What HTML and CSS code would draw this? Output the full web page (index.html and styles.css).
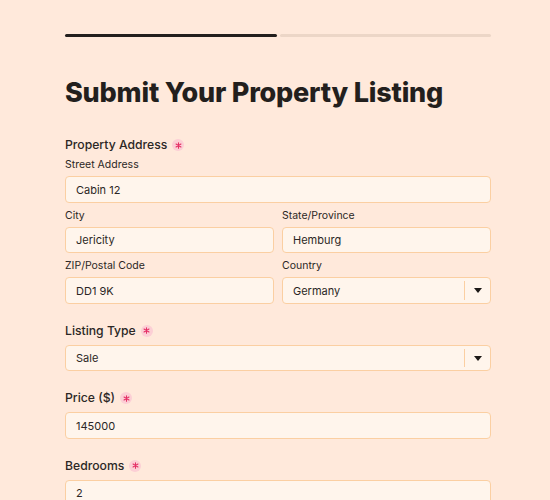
FILE: index.html
```html
<!DOCTYPE html>
<html lang="en">
<head>
<meta charset="utf-8">
<title>Submit Your Property Listing</title>
<link rel="stylesheet" href="styles.css">
</head>
<body>
<div class="page">
  <div class="progress">
    <div class="progress-seg done"></div>
    <div class="progress-seg"></div>
  </div>
  <h1 class="title">Submit Your Property Listing</h1>

  <div class="group">
    <div class="label">Property Address <span class="req"><svg viewBox="0 0 10 10" width="7" height="7"><path d="M5 1v8M1.5 3l7 4M8.5 3l-7 4" stroke="currentColor" stroke-width="1.6" stroke-linecap="round"/></svg></span></div>
    <div class="sub">
      <div class="sublabel">Street Address</div>
      <div class="input">Cabin 12</div>
    </div>
    <div class="row">
      <div class="sub">
        <div class="sublabel">City</div>
        <div class="input">Jericity</div>
      </div>
      <div class="sub">
        <div class="sublabel">State/Province</div>
        <div class="input">Hemburg</div>
      </div>
    </div>
    <div class="row">
      <div class="sub">
        <div class="sublabel">ZIP/Postal Code</div>
        <div class="input">DD1 9K</div>
      </div>
      <div class="sub">
        <div class="sublabel">Country</div>
        <div class="input select"><span class="val">Germany</span><span class="sep"></span><span class="caret"></span></div>
      </div>
    </div>
  </div>

  <div class="group">
    <div class="label">Listing Type <span class="req"><svg viewBox="0 0 10 10" width="7" height="7"><path d="M5 1v8M1.5 3l7 4M8.5 3l-7 4" stroke="currentColor" stroke-width="1.6" stroke-linecap="round"/></svg></span></div>
    <div class="input select"><span class="val">Sale</span><span class="sep"></span><span class="caret"></span></div>
  </div>

  <div class="group">
    <div class="label">Price ($) <span class="req"><svg viewBox="0 0 10 10" width="7" height="7"><path d="M5 1v8M1.5 3l7 4M8.5 3l-7 4" stroke="currentColor" stroke-width="1.6" stroke-linecap="round"/></svg></span></div>
    <div class="input">145000</div>
  </div>

  <div class="group">
    <div class="label">Bedrooms <span class="req"><svg viewBox="0 0 10 10" width="7" height="7"><path d="M5 1v8M1.5 3l7 4M8.5 3l-7 4" stroke="currentColor" stroke-width="1.6" stroke-linecap="round"/></svg></span></div>
    <div class="input">2</div>
  </div>
</div>
</body>
</html>
```

FILE: styles.css
```css
* { box-sizing: border-box; }
html, body { margin: 0; padding: 0; }
body {
  background: #ffe9db;
  font-family: Inter, "Noto Sans", sans-serif;
  color: #2b2725;
}
.page {
  padding: 34px 59px 0 65px;
}
.progress {
  display: flex;
  gap: 3px;
}
.progress-seg {
  flex: 1;
  height: 3px;
  border-radius: 2px;
  background: #ecd6c7;
}
.progress-seg.done { background: #231f1d; }
.title {
  margin: 40px 0 27px;
  font-size: 27px;
  line-height: 1.2;
  font-weight: 800;
  color: #231f1d;
  letter-spacing: -0.2px;
}
.group {
  display: flex;
  flex-direction: column;
  gap: 6px;
  margin-bottom: 18px;
}
.label {
  font-size: 12.2px;
  line-height: 18px;
  font-weight: 500;
  color: #2b2725;
  margin-bottom: -1px;
  display: flex;
  align-items: center;
}
.group .label + .sub { margin-top: -1px; }
.req {
  display: inline-flex;
  align-items: center;
  justify-content: center;
  width: 12px;
  height: 12px;
  margin-left: 5px;
  border-radius: 50%;
  background: #fccfd5;
  color: #e52f66;
}
.req svg { display: block; }
.row {
  display: grid;
  grid-template-columns: 1fr 1fr;
  gap: 8px;
}
.sub {
  display: flex;
  flex-direction: column;
}
.sublabel {
  font-size: 10.5px;
  line-height: 14px;
  margin-bottom: 4px;
  color: #2b2725;
}
.input {
  height: 26.5px;
  border: 1px solid #fbcfa2;
  border-radius: 4px;
  background: #fff5ec;
  padding: 0 10px;
  display: flex;
  align-items: center;
  font-size: 11px;
  color: #2b2725;
}
.select { padding-right: 0; }
.select .val { flex: 1; }
.sep {
  width: 1px;
  align-self: stretch;
  margin: 3px 0;
  background: #fbcfa2;
}
.caret {
  width: 25px;
  display: flex;
  justify-content: center;
}
.caret::before {
  content: "";
  border-left: 4.5px solid transparent;
  border-right: 4.5px solid transparent;
  border-top: 5px solid #1c1917;
}
```
